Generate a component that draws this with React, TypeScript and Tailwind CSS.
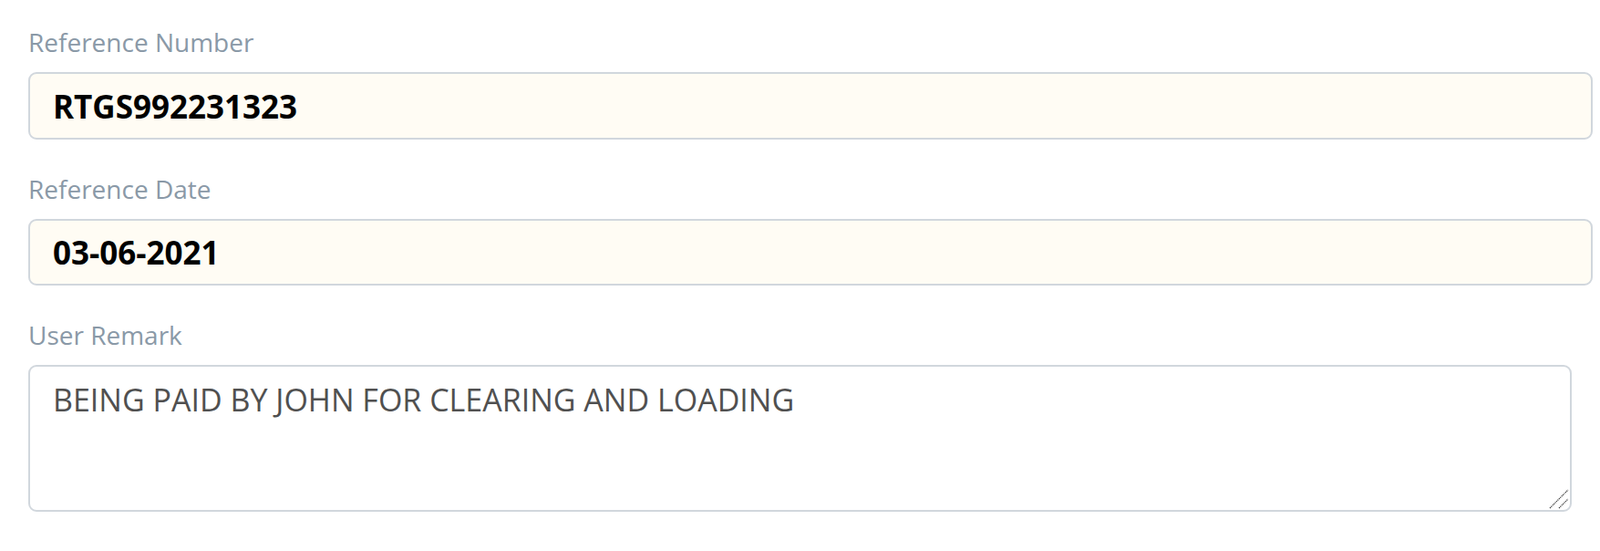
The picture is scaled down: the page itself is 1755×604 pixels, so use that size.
import React from "react";

const font = { fontFamily: '"Open Sans", "Noto Sans", "Liberation Sans", sans-serif' };

export default function App() {
  return (
    <div className="min-h-screen w-full bg-white pl-[31px] pt-[26px]" style={font}>
      <div className="w-[1716px]">
        <label className="block text-[28px] leading-[40px] text-[#8a99a7] mb-[13px]">Reference Number</label>
        <input
          readOnly
          value="RTGS992231323"
          className="block w-full h-[74px] rounded-[9px] border-2 border-[#d1d7dd] bg-[#fffcf4] pl-[25px] text-[35px] font-bold text-black outline-none"
        />
      </div>
      <div className="w-[1716px] mt-[34px]">
        <label className="block text-[28px] leading-[40px] text-[#8a99a7] mb-[13px]">Reference Date</label>
        <input
          readOnly
          value="03-06-2021"
          className="block w-full h-[73px] rounded-[9px] border-2 border-[#d1d7dd] bg-[#fffcf4] pl-[25px] text-[35px] font-bold text-black outline-none"
        />
      </div>
      <div className="w-[1693px] mt-[34px]">
        <label className="block text-[28px] leading-[40px] text-[#8a99a7] mb-[13px]">User Remark</label>
        <div className="relative">
          <textarea
            readOnly
            defaultValue="BEING PAID BY JOHN FOR CLEARING AND LOADING"
            className="block w-full h-[161px] resize-none rounded-[9px] border-2 border-[#d1d7dd] bg-white pl-[25px] pt-[14px] text-[34px] leading-[44px] text-[#505050] outline-none"
          />
          <svg
            className="absolute right-[3px] bottom-[3px] pointer-events-none"
            width="22"
            height="22"
            viewBox="0 0 22 22"
          >
            <line x1="1" y1="21" x2="21" y2="1" stroke="#333" strokeWidth="1.2" strokeDasharray="1.2 0.8" />
            <line x1="11" y1="21" x2="21" y2="11" stroke="#333" strokeWidth="1.2" strokeDasharray="1.2 0.8" />
          </svg>
        </div>
      </div>
    </div>
  );
}
